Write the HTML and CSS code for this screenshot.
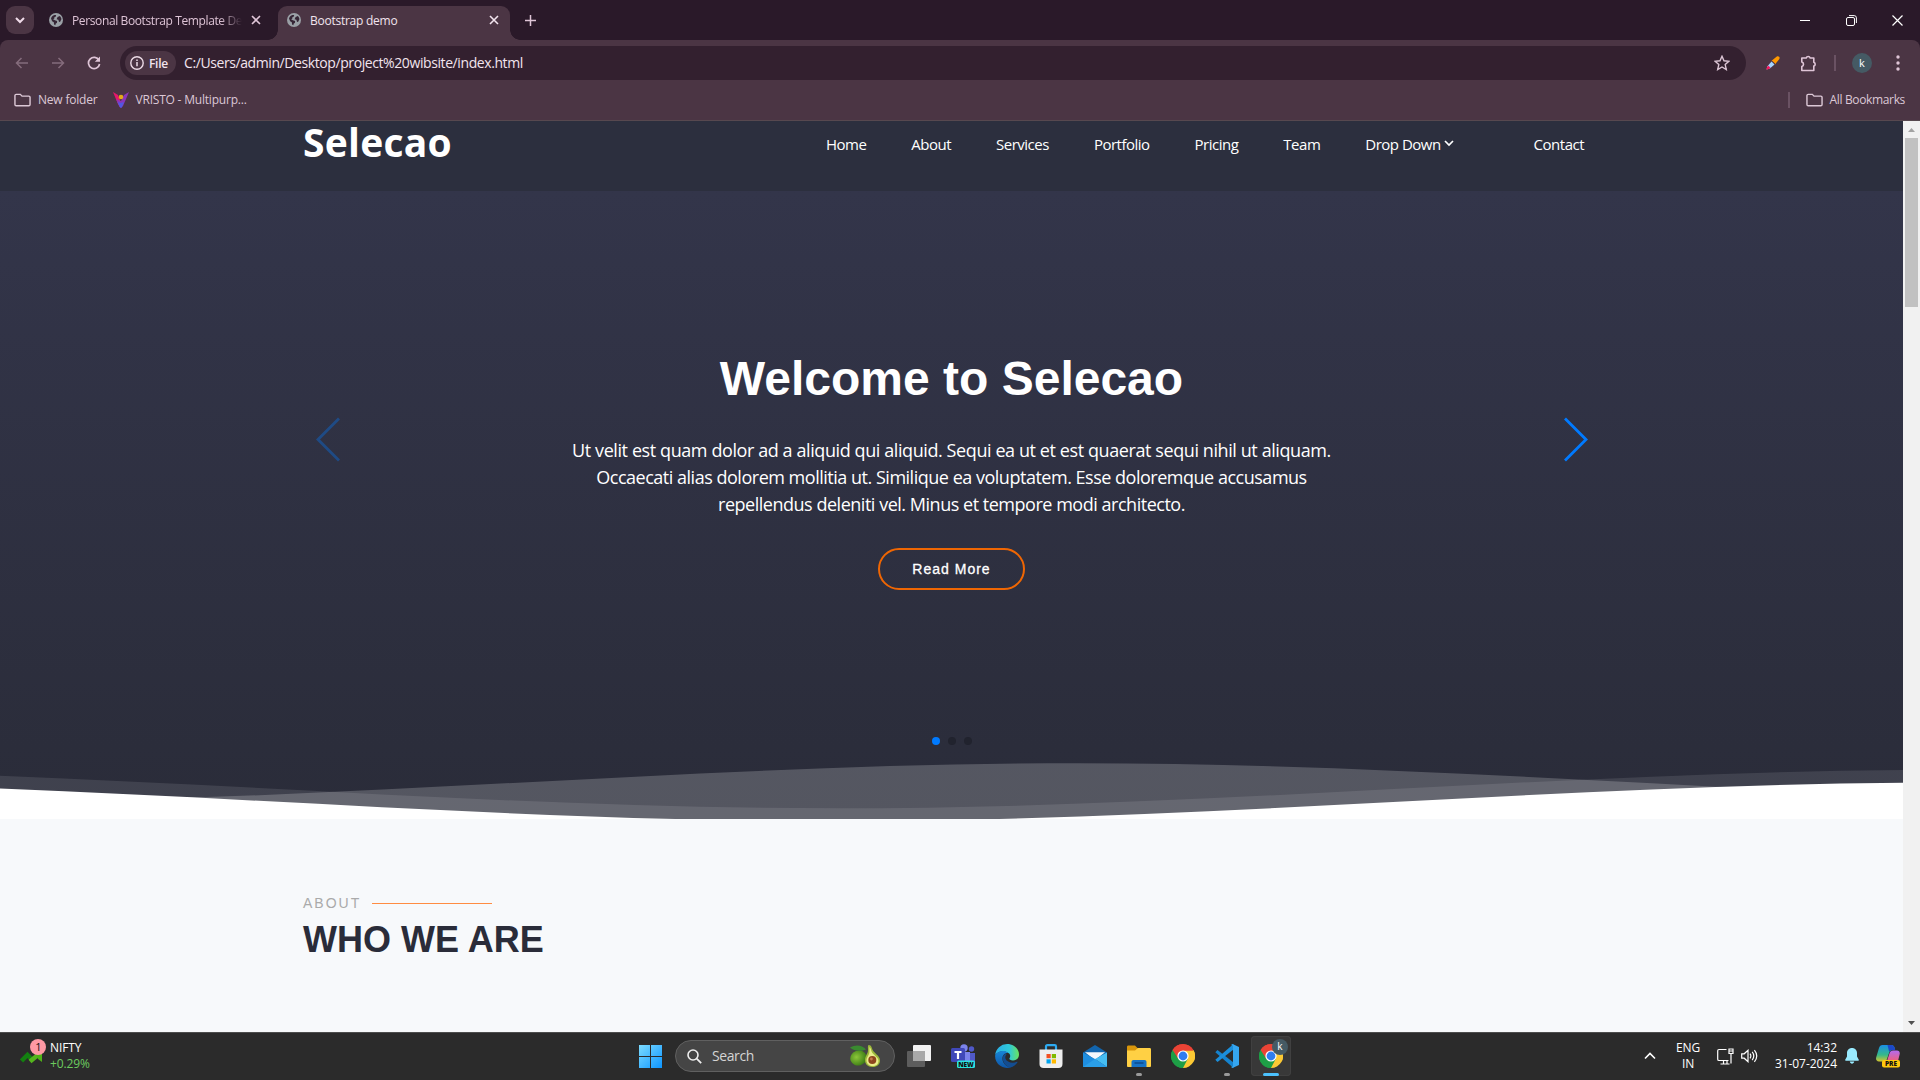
FILE: index.html
```html
<!DOCTYPE html>
<html lang="en">
<head>
<meta charset="utf-8">
<title>Bootstrap demo</title>
<link rel="stylesheet" href="styles.css">
</head>
<body>
<svg class="defs" width="0" height="0" aria-hidden="true">
  <defs>
    <symbol id="globe" viewBox="0 0 16 16"><circle cx="8" cy="8" r="8" fill="#9aa0a6"/><path d="M2.3 6.2c.6-1.800 2-3.400 3.900-4l2 .2-.6 1.900-1.700.7.300 1.400-1.500.6 2 1.400 2.600.8-.2 2-1.500 1.100-.3 1.700-1.500-.8-.3-2.500-1.900-1.200zM9.800 4.600l2.600-1.200c1 1 1.700 2.300 1.800 3.800l-1.600 3-1.200-.3-.7-2.100-2-.8z" fill="#352535"/></symbol>
    <symbol id="close" viewBox="0 0 10 10"><path d="M1 1l8 8M9 1L1 9" stroke="currentColor" stroke-width="1.6" fill="none"/></symbol>
    <symbol id="folder" viewBox="0 0 18 14"><path d="M2.300 1h4.400l1.800 1.900h7.200c.7 0 1.300.5 1.300 1.200v7.600c0 .7-.6 1.300-1.300 1.300H2.300C1.600 13 1 12.400 1 11.700V2.300C1 1.600 1.600 1 2.300 1z" fill="none" stroke="currentColor" stroke-width="1.500"/></symbol>
    <symbol id="chrome" viewBox="0 0 24 24"><path d="M12 12L1.610 6A12 12 0 0 1 22.390 6z" fill="#ea4335"/><path d="M12 12L22.390 6A12 12 0 0 1 12 24z" fill="#fcc934"/><path d="M12 12L12 24A12 12 0 0 1 1.610 6z" fill="#1e9e46"/><path d="M12 6.500h10.650a12 12 0 0 1 .1 11L16.800 14.700z" fill="#fcc934"/><path d="M7.200 14.700L1.610 6a12 12 0 0 0 10.400 18l4.800-9.300z" fill="#1e9e46"/><path d="M1.610 6A12 12 0 0 1 22.390 6.500H12l-4.800 8.200z" fill="#ea4335"/><circle cx="12" cy="12" r="5.600" fill="#fff"/><circle cx="12" cy="12" r="4.400" fill="#2f7df0"/></symbol>
  </defs>
</svg>

<div class="browser">
  <div class="tabstrip">
    <div class="tabsearch"><svg width="10" height="7" viewBox="0 0 10 7"><path d="M1 1l4 4 4-4" fill="none" stroke="#f0dcea" stroke-width="2"/></svg></div>
    <div class="tab"><svg class="fav"><use href="#globe"/></svg><span class="tab-title faded">Personal Bootstrap Template De</span><svg class="x"><use href="#close"/></svg></div>
    <div class="tab active"><svg class="fav"><use href="#globe"/></svg><span class="tab-title">Bootstrap demo</span><svg class="x"><use href="#close"/></svg></div>
    <svg class="plus" width="11" height="11" viewBox="0 0 11 11"><path d="M5.500 0v11M0 5.500h11" stroke="#dfc5d7" stroke-width="1.500"/></svg>
    <div class="wincontrols">
      <svg width="11" height="11" viewBox="0 0 11 11"><path d="M0 5.500h10" stroke="#fff"/></svg>
      <svg width="11" height="11" viewBox="0 0 11 11" fill="none" stroke="#fff"><rect x=".5" y="2.500" width="8" height="8" rx="1.500"/><path d="M3 .6h5.200a2.200 2.200 0 0 1 2.200 2.200V8"/></svg>
      <svg width="11" height="11" viewBox="0 0 11 11"><path d="M.5.500l10 10M10.500.500l-10 10" stroke="#fff" stroke-width="1.200"/></svg>
    </div>
  </div>
  <div class="toolbar">
    <div class="navbtns">
      <svg class="off" width="14" height="12" viewBox="0 0 14 12"><path d="M13 6H1.500M6.500 1l-5 5 5 5" fill="none" stroke="currentColor" stroke-width="1.500"/></svg>
      <svg class="off" width="14" height="12" viewBox="0 0 14 12"><path d="M1 6h11.500M7.500 1l5 5-5 5" fill="none" stroke="currentColor" stroke-width="1.500"/></svg>
      <svg width="14" height="14" viewBox="0 0 14 14"><path d="M12 4.300A5.600 5.600 0 1 0 12.600 8" fill="none" stroke="currentColor" stroke-width="1.700"/><path d="M13 .6v5.200H7.800z" fill="currentColor"/></svg>
    </div>
    <div class="omnibox">
      <div class="chip"><svg width="14" height="14" viewBox="0 0 14 14"><circle cx="7" cy="7" r="6.200" fill="none" stroke="#ecdbe6" stroke-width="1.400"/><path d="M7 6v4.200M7 3.500v1.500" stroke="#ecdbe6" stroke-width="1.500"/></svg><span>File</span></div>
      <span class="url">C:/Users/admin/Desktop/project%20wibsite/index.html</span>
      <svg class="star" width="16" height="16" viewBox="0 0 16 16"><path d="M8 1.300l2 4.500 4.900.5-3.700 3.300 1.100 4.900L8 12l-4.300 2.500 1.100-4.900L1.100 6.300 6 5.800z" fill="none" stroke="#dcc5d5" stroke-width="1.400"/></svg>
    </div>
    <div class="actions">
      <svg width="14" height="14" viewBox="0 0 14 14"><path d="M5.500 5.500l3 3-4.600 4-3.300 1 .7-3z" fill="#a4d4ff"/><path d="M2.500 9.800l2 2-1 1-3.300 1 .9-3z" fill="#f5175d"/><path d="M6.500 4l4-3.300c2-1.200 4 .6 2.700 2.600L9.700 7.500l.4 1L5.600 4.200z" fill="#ff9800"/></svg>
      <svg width="18" height="17" viewBox="0 0 18 17"><path d="M1.800 3h4.400a2.100 2.100 0 0 1 4 0h3.600v4.300a2 2 0 0 1 0 3.800v4.400h-12v-4a2.400 2.400 0 0 0 0-4.600z" fill="none" stroke="#dfc5d7" stroke-width="1.600" stroke-linejoin="round"/></svg>
      <i class="sep"></i>
      <span class="avatar">k</span>
      <svg width="4" height="16" viewBox="0 0 4 16" fill="#dfc5d7"><circle cx="2" cy="2" r="1.700"/><circle cx="2" cy="8" r="1.700"/><circle cx="2" cy="14" r="1.700"/></svg>
    </div>
  </div>
  <div class="bookmarks">
    <svg class="folder"><use href="#folder"/></svg><span class="bm bm-new">New folder</span>
    <svg class="vristo" width="16" height="16" viewBox="0 0 16 16"><path d="M0 0l5 3 2 5 1 3-1 4-2-3z" fill="#e6176b"/><path d="M16 0l-5 3-3 6-3-1-2-1 3.500 8L8 16l2-2z" fill="#8a35b8"/><path d="M4.500 10l3 1 3.500-1-2 5-1 1-1-1z" fill="#5158e0"/><circle cx="8" cy="5" r="2.300" fill="#e3aa18"/></svg><span class="bm bm-v">VRISTO - Multipurp...</span>
    <div class="allbm"><i class="sep"></i><svg class="folder"><use href="#folder"/></svg><span class="bm bm-all">All Bookmarks</span></div>
  </div>
</div>

<div class="viewport">
  <div class="page">
    <header class="site-header">
      <div class="container">
        <h1 class="logo">Selecao</h1>
        <nav>
          <a>Home</a><a>About</a><a>Services</a><a>Portfolio</a><a>Pricing</a><a>Team</a>
          <a class="drop"><span>Drop Down</span><svg width="10" height="7" viewBox="0 0 10 7"><path d="M1 1l4 4 4-4" fill="none" stroke="#fff" stroke-width="1.700"/></svg></a>
          <a>Contact</a>
        </nav>
      </div>
    </header>
    <section class="hero">
      <div class="slider">
        <svg class="arrow prev" width="26" height="45" viewBox="0 0 26 45"><path d="M24 1.500L3 22.500l21 21" fill="none" stroke="#007aff" stroke-width="2.800"/></svg>
        <div class="slide">
          <h2>Welcome to Selecao</h2>
          <p><span class="l1">Ut velit est quam dolor ad a aliquid qui aliquid. Sequi ea ut et est quaerat sequi nihil ut aliquam.</span><br><span class="l2">Occaecati alias dolorem mollitia ut. Similique ea voluptatem. Esse doloremque accusamus</span><br><span class="l3">repellendus deleniti vel. Minus et tempore modi architecto.</span></p>
          <a class="btn">Read More</a>
        </div>
        <svg class="arrow" width="26" height="45" viewBox="0 0 26 45"><path d="M2 1.500l21 21-21 21" fill="none" stroke="#007aff" stroke-width="2.800"/></svg>
      </div>
      <div class="dots"><i class="on"></i><i></i><i></i></div>
      <svg class="waves" viewBox="0 24 150 28" preserveAspectRatio="none">
        <defs><path id="wave" d="M-160 44c30 0 58-18 88-18s58 18 88 18 58-18 88-18 58 18 88 18v44h-352z"/></defs>
        <use href="#wave" x="50" y="3" fill="rgba(255,255,255,.1)"/>
        <use href="#wave" x="-19" y="0" fill="rgba(255,255,255,.2)"/>
        <use href="#wave" x="50" y="9" fill="#fff"/>
      </svg>
    </section>
    <section class="about">
      <div class="kicker"><span>ABOUT</span><i></i></div>
      <h2>WHO WE ARE</h2>
    </section>
  </div>
  <div class="scrollbar">
    <svg width="7" height="4" viewBox="0 0 7 4"><path d="M0 4l3.500-4L7 4z" fill="#a3a3a3"/></svg>
    <div class="thumb"></div>
    <svg class="down" width="7" height="4" viewBox="0 0 7 4"><path d="M0 0l3.500 4L7 0z" fill="#505050"/></svg>
  </div>
</div>

<footer class="taskbar">
  <div class="widget">
    <svg width="28" height="30" viewBox="0 0 28 30"><path d="M1.500 22l6-6 4.500 4.500" fill="none" stroke="#138010" stroke-width="4.500"/><path d="M10 22.500l9-7.500" fill="none" stroke="#55b51d" stroke-width="4.500"/><path d="M15 13h7v10l-4-3z" fill="#4fb117"/><circle cx="18" cy="8" r="8" fill="#ff99a4"/><text x="18.500" y="12" text-anchor="middle" class="badge">1</text></svg>
    <div class="quote"><span>NIFTY</span><span class="up">+0.29%</span></div>
  </div>
  <div class="apps">
    <svg class="start" width="23" height="23" viewBox="0 0 23 23"><defs><linearGradient id="win" x1="0" y1="0" x2="1" y2="1" gradientUnits="objectBoundingBox"><stop offset="0" stop-color="#7ddcff"/><stop offset="1" stop-color="#0d95ff"/></linearGradient></defs><path d="M0 0h11v11H0zM12 0h11v11H12zM0 12h11v11H0zM12 12h11v11H12z" fill="url(#win)"/></svg>
    <div class="search">
      <svg width="15" height="15" viewBox="0 0 15 15"><circle cx="6" cy="6" r="5" fill="none" stroke="#eee" stroke-width="1.600"/><path d="M9.700 9.700l4.500 4.500" stroke="#eee" stroke-width="1.800"/></svg>
      <span>Search</span>
      <svg class="avo" width="30" height="22" viewBox="0 0 30 22"><defs><radialGradient id="gr" cx=".4" cy=".4" r=".6"><stop offset="0" stop-color="#8cc63a"/><stop offset="1" stop-color="#3f7f16"/></radialGradient></defs><ellipse cx="8.500" cy="13" rx="8.300" ry="7.500" fill="url(#gr)" transform="rotate(-20 8.500 13)"/><path d="M0 2.500C5-.5 12-.5 16 4.500 11 6.500 4 6.500 0 2.500z" fill="#3a8a30"/><path d="M18.500 0c2 0 3 1 3.500 3.500C23 8 30 10 30 15.500c0 4-3 6.500-7.500 6.500-5 0-7.500-3-7.500-7s3-6 3-10c0-2-.5-4 .5-5z" fill="#9cb83a"/><path d="M19.500 2c1.500 1 1.300 3 2.300 5 1.300 3 6.700 5 6.700 9 0 3-2.500 5-5.700 5s-6.300-2-6.300-5.500 2.700-5 2.900-8.500z" fill="#eaec8a"/><circle cx="22.300" cy="15" r="4" fill="#8c451d"/><circle cx="21.400" cy="14" r="1.400" fill="#c67a4c"/></svg>
    </div>
    <div class="app"><svg width="24" height="24" viewBox="0 0 24 24"><rect x="6" y="1" width="18" height="16" rx="1" fill="#f2f2f2"/><rect x="0" y="7" width="18" height="16" rx="1" fill="#5d5d5d"/><rect x="6" y="7" width="12" height="10" fill="#a9a9a9"/></svg></div>
    <div class="app"><svg width="24" height="24" viewBox="0 0 24 24"><circle cx="13" cy="4" r="3.700" fill="#7b83eb"/><circle cx="20.500" cy="5" r="2.700" fill="#5059c9"/><path d="M16 9h8v8c0 3-2 4-4 4h-4z" fill="#5059c9"/><path d="M8 8h11v10c0 3-3 5-6 5s-5-2-5-5z" fill="#7b83eb"/><rect x="0" y="4" width="14" height="14" rx="1.500" fill="#4048b8"/><path d="M3.500 7h7v1.900H8.100V15H5.900V8.900H3.500z" fill="#fff"/><rect x="6" y="16.500" width="18" height="7.500" rx="1.500" fill="#2be2e0"/><text x="15" y="22.700" text-anchor="middle" class="new">NEW</text></svg></div>
    <div class="app"><svg width="24" height="24" viewBox="0 0 24 24"><defs><linearGradient id="e1" x1="0" y1=".5" x2="1" y2=".5"><stop offset="0" stop-color="#2aaee8"/><stop offset=".6" stop-color="#2fc9d8"/><stop offset="1" stop-color="#6be45c"/></linearGradient><linearGradient id="e2" x1="0" y1="0" x2="0" y2="1"><stop offset="0" stop-color="#1785d8"/><stop offset="1" stop-color="#0f55a5"/></linearGradient></defs><path d="M.2 11A12 12 0 0 1 12 0c7 0 12 5 12 10.500 0 3.500-2.500 6-6 6-3 0-4-1.200-3.600-2 1.300-2 1-4-.6-5.300C10 6 3 6.500.2 11z" fill="url(#e1)"/><path d="M.1 11.500C2 7 9.500 5.500 13 9c-3.500-.2-6 2.500-5.500 6.500.4 4 4 7.300 8.500 7.800A12 12 0 0 1 .1 11.500z" fill="url(#e2)"/><path d="M8.500 11.500C6 16 10 22.500 15.500 23.500c3-.8 5.500-2.700 7-5.200.2-.5-.2-.7-.6-.5-4.500 2-10 .5-11.400-3-.5-1.600 0-3.500 1.300-5-1.300 0-2.500.7-3.300 1.700z" fill="#134d91"/></svg></div>
    <div class="app"><svg width="24" height="24" viewBox="0 0 24 24"><path d="M7 6V2.500C7 1.700 7.500 1.200 8.300 1.200h7.400c.8 0 1.300.5 1.300 1.300V6" fill="none" stroke="#2daaf0" stroke-width="2.200"/><path d="M.5 5.500h23V20c0 2.500-1.500 4-4 4h-15c-2.500 0-4-1.500-4-4z" fill="#eeeeee"/><path d="M7.500 10h4.200v4.200H7.500z" fill="#f25022"/><path d="M12.800 10H17v4.200h-4.200z" fill="#7fba00"/><path d="M7.500 15.300h4.200v4.200H7.500z" fill="#00a4ef"/><path d="M12.800 15.300H17v4.200h-4.200z" fill="#ffb900"/></svg></div>
    <div class="app"><svg width="24" height="24" viewBox="0 0 24 24"><path d="M0 8.500L12 1l12 7.500V13H0z" fill="#1265ad"/><path d="M2 8.300h20L12 16z" fill="#f4f8fc"/><path d="M0 8.500L12 15 24 23H0z" fill="#1e8ee0"/><path d="M24 8.500v14.500L12 15z" fill="#46bdf2"/><path d="M0 23L12 15l12 8z" fill="#2a9fe8"/></svg></div>
    <div class="app running"><svg width="24" height="24" viewBox="0 0 24 24"><path d="M0 3c0-1 .5-1.500 1.500-1.500H8L10.500 4H14v3H0z" fill="#d9960b"/><path d="M0 6.500h8L11 4h11.500c1 0 1.500.5 1.500 1.500V22c0 .5-.5 1-1 1H1c-.5 0-1-.5-1-1z" fill="#ffd044"/><path d="M4.500 23v-5c0-1.200.8-2 2-2h11c1.200 0 2 .8 2 2v5z" fill="#1673c7"/><path d="M7.500 19h9" stroke="#0c4a8c" stroke-width="1.500"/></svg></div>
    <div class="app"><svg width="24" height="24"><use href="#chrome"/></svg></div>
    <div class="app running"><svg width="24" height="24" viewBox="0 0 24 24"><path d="M2.500 6L18.500 18.500v5.500L.3 8.300z" fill="#1583ce"/><path d="M2.500 18L18.500 5.500V0L.3 15.700z" fill="#1b8fdb"/><path d="M17.500 0L24 3v18l-6.500 3-1.500-1 2-.8V1.800L16 1z" fill="#35a6f0"/></svg></div>
    <div class="app current"><svg width="24" height="24"><use href="#chrome"/></svg><span class="mini">k</span></div>
  </div>
  <div class="tray">
    <svg class="chev" width="12" height="8" viewBox="0 0 12 8"><path d="M1 6.500l5-5 5 5" fill="none" stroke="#fff" stroke-width="1.600"/></svg>
    <div class="lang"><span>ENG</span><span>IN</span></div>
    <svg class="net" width="17" height="17" viewBox="0 0 17 17" fill="none" stroke="#fff" stroke-width="1.200"><path d="M9.500 1.500H2c-.8 0-1.300.5-1.300 1.300v8.400c0 .8.500 1.300 1.300 1.300h9.500M6.500 12.500V16M10 12.500V16M3.500 16h9M12 1h4v4.500h-4zM14 5.500v10M12 3h4"/></svg>
    <svg class="vol" width="17" height="14" viewBox="0 0 17 14" fill="none" stroke="#fff" stroke-width="1.200"><path d="M.7 4.800h2.500L7 1.300v11.400L3.200 9.200H.7zM9 4.700c1.100 1.500 1.100 3.100 0 4.600M11.200 2.900c2 2.600 2 5.600 0 8.200M13.400 1.200c3 3.700 3 7.900 0 11.600"/></svg>
    <div class="clock"><span>14:32</span><span>31-07-2024</span></div>
    <svg class="bell" width="14" height="16" viewBox="0 0 14 16"><path d="M7 0c3 0 5 2.200 5 5v3.500l1.800 3.300c.2.500 0 .9-.5.900H.7c-.5 0-.7-.4-.5-.9L2 8.500V5c0-2.800 2-5 5-5zM4.800 13.600h4.400C9 15 8 15.700 7 15.700S5 15 4.800 13.600z" fill="#99ebff"/></svg>
    <svg class="copilot" width="24" height="24" viewBox="0 0 24 24"><defs><linearGradient id="c1" x1="0" y1="0" x2="0" y2="1"><stop offset="0" stop-color="#1a8fe6"/><stop offset=".6" stop-color="#35b98a"/><stop offset="1" stop-color="#d5c62c"/></linearGradient><linearGradient id="c2" x1="0" y1="0" x2="0" y2="1"><stop offset="0" stop-color="#b26bf0"/><stop offset="1" stop-color="#f0607a"/></linearGradient></defs><path d="M6.500 1h9c1.500 0 2.500 1 3 2.500l.7 2.500h-3c-1.500 0-2.500 1-3 2.500L11 15c-.5 1.500-1.500 2.500-3 2.500H3c-2.500 0-3.500-2-2.700-4.500L3 4c.6-2 1.700-3 3.500-3z" fill="url(#c1)"/><path d="M11.500 1h4c1.500 0 2.500 1 3 2.500l.7 2.500h-3c-1.500 0-2.500 1-3 2z" fill="#1c48c8"/><path d="M17 6.500h4c2.200 0 3.300 1.800 2.600 4L22 17H11l2.600-8c.5-1.500 1.700-2.500 3.400-2.500z" fill="url(#c2)"/><rect x="6" y="16" width="18" height="7.500" rx="2" fill="#ffc90e"/><text x="15" y="22.200" text-anchor="middle" class="new">PRE</text></svg>
  </div>
</footer>
</body>
</html>
```

FILE: styles.css
```css
* { box-sizing: border-box; }
body { margin: 0; width: 1920px; height: 1080px; overflow: hidden; display: flex; flex-direction: column; font-family: "Open Sans", "Noto Sans", sans-serif; color: #fff; background: #fff; }
svg { display: block; flex: none; }
i { display: block; flex: none; }
span { white-space: nowrap; }
.defs { position: absolute; }

.browser { height: 121px; flex: none; border-bottom: 1px solid #57484f; background: linear-gradient(#2a1929 60px, #4b3544 60px); }
.tabstrip { height: 40px; display: flex; align-items: center; padding-left: 6px; background: #2a1929; }
.tabsearch { width: 28px; height: 28px; border-radius: 9px; background: #4b3544; display: flex; align-items: center; justify-content: center; }
.tab { width: 228px; height: 34px; margin: 6px 0 0 15px; padding-bottom: 6px; display: flex; align-items: center; color: #dfc5d7; }
.fav { width: 14px; height: 14px; }
.x { width: 10px; height: 10px; margin-left: auto; }
.tab-title { font-size: 12px; margin-left: 9px; letter-spacing: -.25px; }
.faded { width: 174px; margin-right: -5px; letter-spacing: -.38px; -webkit-mask: linear-gradient(90deg, #000 148px, transparent 170px); mask: linear-gradient(90deg, #000 148px, transparent 170px); }
.tab:not(.active) .x { margin-right: 16px; }
.active { position: relative; width: 232px; margin-left: 1px; padding: 0 11px 6px 9px; background: #4b3544; border-radius: 9px 9px 0 0; color: #f2e4ee; }
.active::before, .active::after { content: ""; position: absolute; bottom: 0; width: 10px; height: 10px; }
.active::before { left: -10px; background: radial-gradient(circle at 0 0, transparent 9.500px, #4b3544 10px); }
.active::after { right: -10px; background: radial-gradient(circle at 100% 0, transparent 9.500px, #4b3544 10px); }
.plus { margin-left: 15px; }
.wincontrols { margin-left: auto; display: flex; gap: 35px; padding-right: 17px; }
.toolbar { height: 46px; display: flex; align-items: center; background: #4b3544; border-radius: 8px 8px 0 0; padding-left: 15px; }
.navbtns { display: flex; align-items: center; gap: 22px; width: 105px; color: #dfc5d7; }
.off { color: #846c7c; }
.omnibox { width: 1626px; height: 34px; border-radius: 17px; background: #33202f; display: flex; align-items: center; padding: 0 16px 0 5px; }
.chip { width: 51px; height: 24px; border-radius: 12px; background: #4b3544; display: flex; align-items: center; padding-left: 5px; gap: 5px; font-size: 12px; font-weight: 600; color: #f2e4ee; }
.chip span { letter-spacing: -.3px; }
.url { margin-left: 8px; padding-bottom: 1px; font-size: 14px; letter-spacing: -.41px; color: #f2e4ee; }
.star { margin-left: auto; }
.actions { display: flex; align-items: center; margin-left: 20px; }
.actions svg + svg { margin-left: 20px; }
.sep { width: 2px; height: 16px; background: #6a5263; }
.actions .sep { margin-left: 16px; }
.avatar { width: 20px; height: 20px; margin: 0 24px 0 16px; border-radius: 50%; background: #455a64; font-size: 11px; line-height: 19px; text-align: center; }
.bookmarks { height: 34px; display: flex; align-items: center; padding: 0 15px 6px 14px; background: #4b3544; color: #dcc8d6; }
.folder { width: 17px; height: 14px; }
.bm { font-size: 12px; margin-left: 7px; padding-bottom: 2px; letter-spacing: -.2px; }
.vristo { margin-left: 16px; }
.bm-v { margin-left: 6px; }
.allbm { margin-left: auto; display: flex; align-items: center; }
.allbm .folder { margin-left: 16px; }
.bm-all { letter-spacing: -.35px; }

.viewport { flex: none; height: 911px; display: flex; }
.page { width: 1903px; background: #f7f9fb; }
.site-header { height: 70px; background: #2c2f3e; }
.container { padding: 0 319px 0 303px; display: flex; justify-content: space-between; height: 46px; align-items: center; }
.logo { margin: -4px 0 0; font-size: 39px; font-weight: 700; line-height: 46px; letter-spacing: .25px; }
nav { display: flex; gap: 45px; font-size: 15px; padding-bottom: 1px; }
nav a { letter-spacing: -.5px; }
.drop { display: flex; gap: 3px; align-items: center; margin-right: 35px; }
.hero { height: 628px; background: linear-gradient(#33354a, #2a2c39); display: flex; flex-direction: column; align-items: center; }
.slider { flex: none; width: 1274px; height: 546px; display: flex; justify-content: space-between; }
.arrow { margin-top: 226px; }
.prev { opacity: .35; }
.slide { width: 900px; text-align: center; }
.slide h2 { margin: 160px 0 0; font: 700 48px/56px "Liberation Sans", Arial, sans-serif; }
.slide p { margin: 30px 0 0; font-size: 18px; line-height: 27px; }
.l1 { letter-spacing: -.41px; }
.l2 { letter-spacing: -.485px; }
.l3 { letter-spacing: -.475px; }
.btn { display: flex; align-items: center; justify-content: center; width: 147px; height: 42px; margin: 30px auto 0; border: 2px solid #ef6603; border-radius: 21px; font: 14px "Liberation Sans", Arial, sans-serif; letter-spacing: 1px; -webkit-text-stroke: .3px #fff; }
.dots { display: flex; gap: 8px; height: 22px; }
.dots i { width: 8px; height: 8px; border-radius: 50%; background: #21232e; }
.dots .on { background: #007aff; }
.waves { width: 1903px; height: 60px; }
.about { padding: 75px 0 0 303px; color: #2a2c39; font-family: "Liberation Sans", Arial, sans-serif; }
.kicker { display: flex; align-items: center; gap: 11px; height: 18px; font-size: 14px; letter-spacing: 2px; color: #aaa; }
.kicker i { width: 120px; height: 1px; background: #ff8c42; }
.about h2 { margin: 7px 0 0; font-size: 36px; line-height: 42px; }
.scrollbar { width: 17px; background: #f1f1f1; display: flex; flex-direction: column; align-items: center; padding: 7px 0; }
.thumb { width: 13px; height: 169px; margin-top: 6px; background: #c1c1c1; }
.down { margin-top: auto; }

.taskbar { position: relative; height: 48px; flex: none; background: #2b2b2b; border-top: 1px solid #4d4d4d; display: flex; align-items: center; padding-bottom: 1px; }
.widget { display: flex; width: 639px; padding-left: 20px; align-items: center; }
.widget svg { margin-top: -4px; }
.badge { font-size: 11px; fill: #111; }
.quote, .lang, .clock { display: flex; flex-direction: column; font-size: 12px; line-height: 16px; padding-bottom: 1px; }
.quote { margin-left: 2px; letter-spacing: -.1px; }
.up { color: #6ccb5f; }
.apps { display: flex; align-items: center; }
.search { width: 220px; height: 32px; margin: 0 4px 0 13px; border: 1px solid #606060; border-radius: 16px; background: #454545; display: flex; align-items: center; padding: 0 14px 0 11px; font-size: 14px; color: #d4d4d4; }
.search span { margin-left: 10px; padding-bottom: 1px; letter-spacing: -.4px; }
.avo { margin-left: auto; }
.app { position: relative; width: 40px; height: 40px; margin-right: 4px; display: flex; align-items: center; justify-content: center; }
.new { font-size: 6.500px; font-weight: 800; fill: #111; }
.running::after, .current::after { content: ""; position: absolute; bottom: 0; left: 17px; width: 6px; height: 3px; border-radius: 2px; background: #9a9a9a; }
.current { background: #383838; border-radius: 4px; box-shadow: 0 0 0 1px #404040 inset; }
.current::after { left: 12px; width: 16px; background: #4cc2ff; }
.mini { position: absolute; left: 21px; top: 3px; width: 16px; height: 16px; border-radius: 50%; background: #455a64; font-size: 10px; line-height: 15px; text-align: center; }
.tray { margin-left: auto; display: flex; align-items: center; padding-right: 20px; }
.lang { width: 40px; align-items: center; margin-left: 12px; letter-spacing: -.2px; }
.net { margin-left: 9px; }
.vol { margin-left: 7px; }
.clock { width: 79px; align-items: flex-end; letter-spacing: -.05px; }
.bell { margin-left: 8px; }
.copilot { margin-left: 17px; }
```
